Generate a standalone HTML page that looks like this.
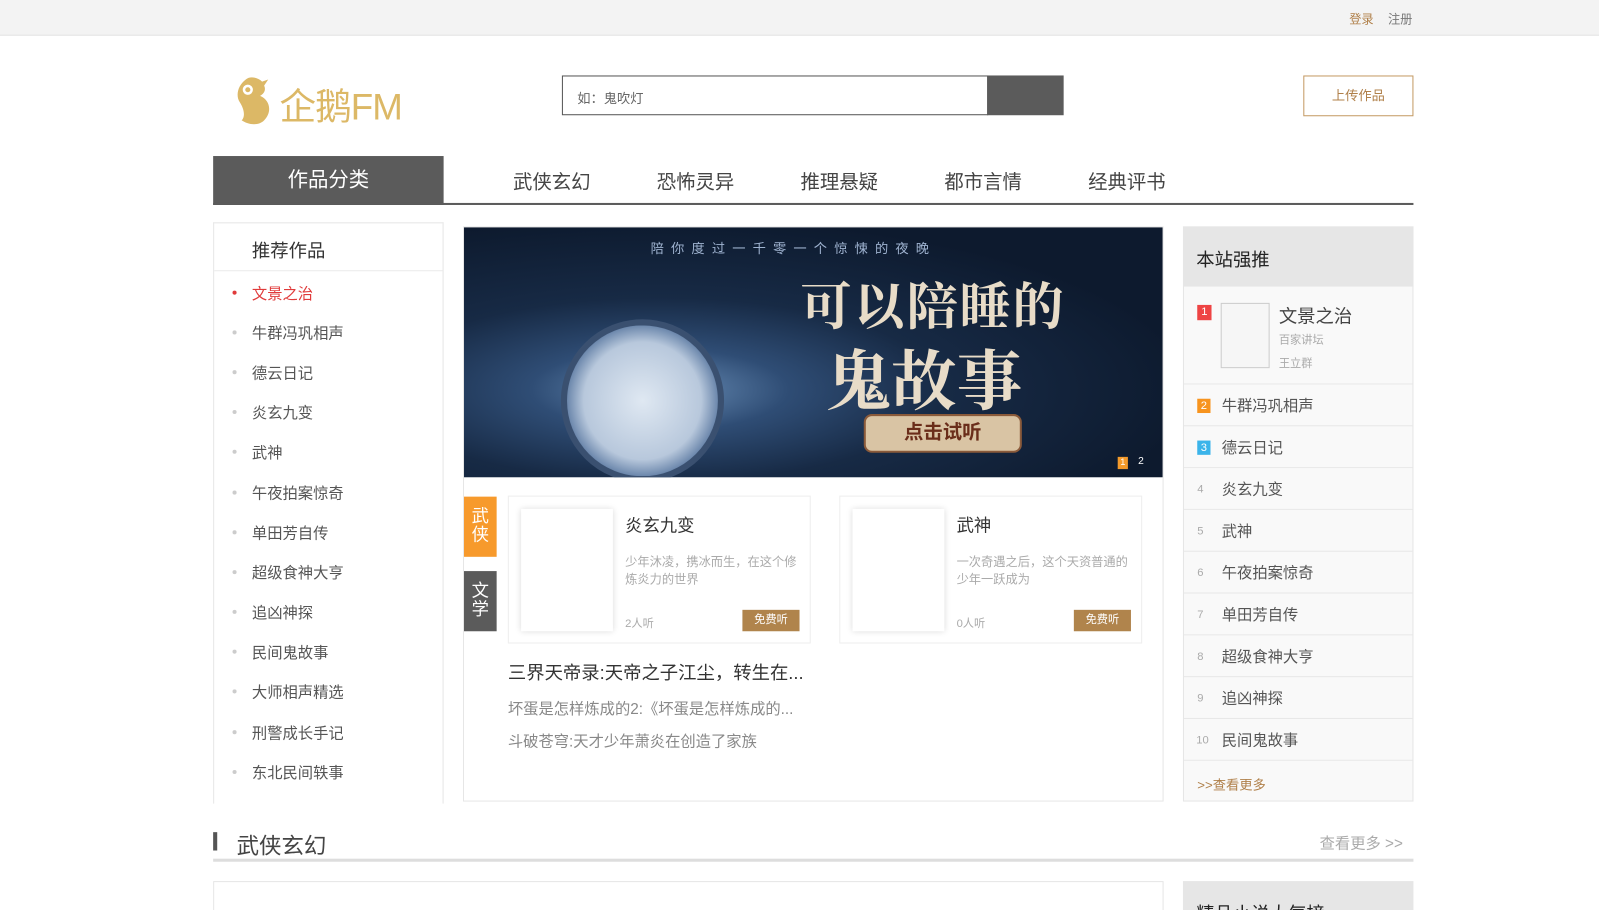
<!DOCTYPE html>
<html><head><meta charset="utf-8"><style>
*{margin:0;padding:0;box-sizing:border-box}
html,body{width:1599px;height:910px;overflow:hidden;background:#fff}
body{font-family:"Liberation Sans","Noto Sans CJK SC",sans-serif;color:#333;position:relative}
#w{position:absolute;left:0;top:0;width:1568px;height:893px;transform:scale(1.0198);transform-origin:0 0}
.a{position:absolute;white-space:nowrap}
.top{left:0;top:0;width:1568px;height:35px;background:#f3f3f3;border-bottom:1px solid #e3e3e3}
.lst div{position:absolute;left:0;font-size:15px;color:#555;white-space:nowrap}
.lst span{position:absolute;left:-19px;top:8px;width:4px;height:4px;border-radius:2px;background:#ccc}
.rk{position:absolute;left:0;width:225px;height:41px;border-bottom:1px solid #e8e8e8;font-size:15px;color:#555;white-space:nowrap}
.rk b{position:absolute;left:13px;top:15px;font-size:11px;color:#aaa;font-weight:normal}
.rk span{position:absolute;left:37px;top:10px}
.card{border:1px solid #eee;background:#fff}
.cov{position:absolute;left:12px;top:12px;width:90px;height:120px;background:#fff;box-shadow:0 0 6px rgba(0,0,0,.15)}
.wr{white-space:normal}
</style></head><body><div id="w">
<div class="a top"></div>
<div class="a" style="left:1323px;top:10px;font-size:12px;color:#b0804a">登录</div>
<div class="a" style="left:1361px;top:10px;font-size:12px;color:#777">注册</div>
<svg class="a" style="left:231px;top:74px" width="38" height="50" viewBox="0 0 38 50"><path d="M10 4 C14 0 22 2 26 6 L32 4 L28 10 C30 14 28 18 24 20 C34 24 36 36 28 44 C22 50 12 48 6 44 C10 40 8 32 4 26 C0 20 2 10 10 4Z" fill="#dcb866"/><circle cx="12" cy="14" r="5" fill="#fff"/><circle cx="12" cy="14" r="2.5" fill="#dcb866"/></svg>
<div class="a" style="left:274px;top:76px;font-size:36px;color:#dcb866;letter-spacing:-1px">企鹅FM</div>
<div class="a" style="left:551px;top:74px;width:418px;height:39px;border:1px solid #555;font-size:13px;color:#666;padding:11px 14px">如：鬼吹灯</div>
<div class="a" style="left:968px;top:74px;width:75px;height:39px;background:#5b5b5b"></div>
<div class="a" style="left:1278px;top:74px;width:108px;height:40px;border:1px solid #c49a63;color:#b0804a;font-size:13px;text-align:center;line-height:38px">上传作品</div>
<div class="a" style="left:209px;top:153px;width:226px;height:48px;background:#5b5b5b;color:#fff;font-size:20px;text-align:center;line-height:48px">作品分类</div>
<div class="a" style="left:209px;top:199px;width:1177px;height:2px;background:#5b5b5b"></div>
<div class="a" style="left:503px;top:164px;font-size:19px;color:#444">武侠玄幻</div>
<div class="a" style="left:644px;top:164px;font-size:19px;color:#444">恐怖灵异</div>
<div class="a" style="left:785px;top:164px;font-size:19px;color:#444">推理悬疑</div>
<div class="a" style="left:926px;top:164px;font-size:19px;color:#444">都市言情</div>
<div class="a" style="left:1067px;top:164px;font-size:19px;color:#444">经典评书</div>

<div class="a" style="left:209px;top:218px;width:226px;height:570px;border:1px solid #e6e6e6;border-bottom:none"></div>
<div class="a" style="left:210px;top:265px;width:224px;height:1px;background:#eaeaea"></div>
<div class="a" style="left:247px;top:232px;font-size:18px;color:#333">推荐作品</div>
<div class="a lst" style="left:247px;top:277px;">
<div style="top:0;color:#e03a3a"><span style="background:#e03a3a"></span>文景之治</div>
<div style="top:39px"><span></span>牛群冯巩相声</div>
<div style="top:78px"><span></span>德云日记</div>
<div style="top:117px"><span></span>炎玄九变</div>
<div style="top:156px"><span></span>武神</div>
<div style="top:196px"><span></span>午夜拍案惊奇</div>
<div style="top:235px"><span></span>单田芳自传</div>
<div style="top:274px"><span></span>超级食神大亨</div>
<div style="top:313px"><span></span>追凶神探</div>
<div style="top:352px"><span></span>民间鬼故事</div>
<div style="top:391px"><span></span>大师相声精选</div>
<div style="top:431px"><span></span>刑警成长手记</div>
<div style="top:470px"><span></span>东北民间轶事</div>
</div>

<div class="a" style="left:454px;top:222px;width:687px;height:564px;border:1px solid #e6e6e6"></div>
<div class="a" style="left:455px;top:223px;width:685px;height:245px;background:radial-gradient(ellipse at 28% 65%,#6a8fb8 0,#2f4d75 18%,#172a45 40%,#0d1a2e 75%);overflow:hidden">
<div class="a" style="left:183px;top:10px;font-size:13px;color:#9fb3d0;letter-spacing:7px">陪你度过一千零一个惊悚的夜晚</div>
<div class="a" style="left:95px;top:90px;width:160px;height:160px;border-radius:50%;background:radial-gradient(circle,#dfe8f2 0,#b8c8dc 55%,#6f8aae 70%,#24385a 78%);border:6px solid #3a5070"></div>
<div class="a" style="left:330px;top:38px;font-size:50px;font-weight:bold;color:#e8dcc8;font-family:'Noto Serif CJK SC',serif;letter-spacing:2px">可以陪睡的</div>
<div class="a" style="left:355px;top:100px;font-size:64px;font-weight:bold;color:#e8dcc8;font-family:'Noto Serif CJK SC',serif">鬼故事</div>
<div class="a" style="left:392px;top:183px;width:155px;height:38px;border-radius:8px;background:#d9c4a4;border:2px solid #8a5a3a;color:#6a2d1a;font-size:19px;font-weight:bold;text-align:center;line-height:34px">点击试听</div>
<div class="a" style="left:641px;top:225px;width:10px;height:12px;background:#f39a2b;color:#fff;font-size:9px;text-align:center">1</div>
<div class="a" style="left:661px;top:224px;color:#fff;font-size:10px">2</div>
</div>
<div class="a" style="left:455px;top:487px;width:32px;height:59px;background:#f79a2c;color:#fff;font-size:17px;line-height:18px;text-align:center;padding-top:11px;white-space:normal">武<br>侠</div>
<div class="a" style="left:455px;top:560px;width:32px;height:59px;background:#5b5b5b;color:#fff;font-size:17px;line-height:18px;text-align:center;padding-top:11px;white-space:normal">文<br>学</div>
<div class="a card" style="left:498px;top:486px;width:297px;height:145px"><div class="cov"></div>
<div class="a" style="left:114px;top:14px;font-size:17px;color:#333">炎玄九变</div>
<div class="a wr" style="left:114px;top:56px;width:172px;font-size:12px;color:#aaa;line-height:17px">少年沐凌，携冰而生，在这个修炼炎力的世界</div>
<div class="a" style="left:114px;top:116px;font-size:11px;color:#aaa">2人听</div>
<div class="a" style="left:229px;top:111px;width:56px;height:21px;background:#b0844c;color:#fff;font-size:11px;text-align:center;line-height:21px">免费听</div></div>
<div class="a card" style="left:823px;top:486px;width:297px;height:145px"><div class="cov"></div>
<div class="a" style="left:114px;top:14px;font-size:17px;color:#333">武神</div>
<div class="a wr" style="left:114px;top:56px;width:172px;font-size:12px;color:#aaa;line-height:17px">一次奇遇之后，这个天资普通的少年一跃成为</div>
<div class="a" style="left:114px;top:116px;font-size:11px;color:#aaa">0人听</div>
<div class="a" style="left:229px;top:111px;width:56px;height:21px;background:#b0844c;color:#fff;font-size:11px;text-align:center;line-height:21px">免费听</div></div>
<div class="a" style="left:498px;top:646px;font-size:18px;color:#333">三界天帝录:天帝之子江尘，转生在...</div>
<div class="a" style="left:498px;top:684px;font-size:15px;color:#888">坏蛋是怎样炼成的2:《坏蛋是怎样炼成的...</div>
<div class="a" style="left:498px;top:716px;font-size:15px;color:#888">斗破苍穹:天才少年萧炎在创造了家族</div>

<div class="a" style="left:1160px;top:222px;width:226px;height:564px;background:#f9f9f9;border:1px solid #e6e6e6"></div>
<div class="a" style="left:1160px;top:222px;width:226px;height:59px;background:#e6e6e6"></div>
<div class="a" style="left:1173px;top:241px;font-size:18px;color:#222">本站强推</div>
<div class="a" style="left:1161px;top:376px;width:224px;height:1px;background:#e8e8e8"></div>
<div class="a" style="left:1174px;top:299px;width:14px;height:15px;background:#ee4444;color:#fff;font-size:11px;text-align:center;line-height:15px">1</div>
<div class="a" style="left:1197px;top:297px;width:48px;height:64px;border:1px solid #ccc;background:#f6f6f6"></div>
<div class="a" style="left:1254px;top:296px;font-size:18px;color:#444">文景之治</div>
<div class="a" style="left:1254px;top:325px;font-size:11px;color:#aaa">百家讲坛</div>
<div class="a" style="left:1254px;top:348px;font-size:11px;color:#aaa">王立群</div>
<div class="a" style="left:1160px;top:377px">
<div class="rk" style="top:0;left:1px"><b style="background:#f7941e;color:#fff;width:13px;height:14px;text-align:center;line-height:14px;top:14px">2</b><span>牛群冯巩相声</span></div>
<div class="rk" style="top:41px;left:1px"><b style="background:#3bb4ea;color:#fff;width:13px;height:14px;text-align:center;line-height:14px;top:14px">3</b><span>德云日记</span></div>
<div class="rk" style="top:82px;left:1px"><b>4</b><span>炎玄九变</span></div>
<div class="rk" style="top:123px;left:1px"><b>5</b><span>武神</span></div>
<div class="rk" style="top:164px;left:1px"><b>6</b><span>午夜拍案惊奇</span></div>
<div class="rk" style="top:205px;left:1px"><b>7</b><span>单田芳自传</span></div>
<div class="rk" style="top:246px;left:1px"><b>8</b><span>超级食神大亨</span></div>
<div class="rk" style="top:287px;left:1px"><b>9</b><span>追凶神探</span></div>
<div class="rk" style="top:328px;left:1px"><b style="left:12px">10</b><span>民间鬼故事</span></div>
</div>
<div class="a" style="left:1174px;top:759px;font-size:13px;color:#b0804a">&gt;&gt;查看更多</div>

<div class="a" style="left:209px;top:816px;width:4px;height:18px;background:#555"></div>
<div class="a" style="left:232px;top:812px;font-size:22px;color:#444">武侠玄幻</div>
<div class="a" style="left:1294px;top:816px;font-size:15px;color:#aaa">查看更多 &gt;&gt;</div>
<div class="a" style="left:209px;top:842px;width:1177px;height:3px;background:#ddd"></div>
<div class="a" style="left:209px;top:864px;width:932px;height:50px;border:1px solid #e6e6e6"></div>
<div class="a" style="left:1160px;top:864px;width:226px;height:50px;background:#e6e6e6"></div>
<div class="a" style="left:1173px;top:882px;font-size:18px;color:#222">精品小说大气榜</div>
</div></body></html>
